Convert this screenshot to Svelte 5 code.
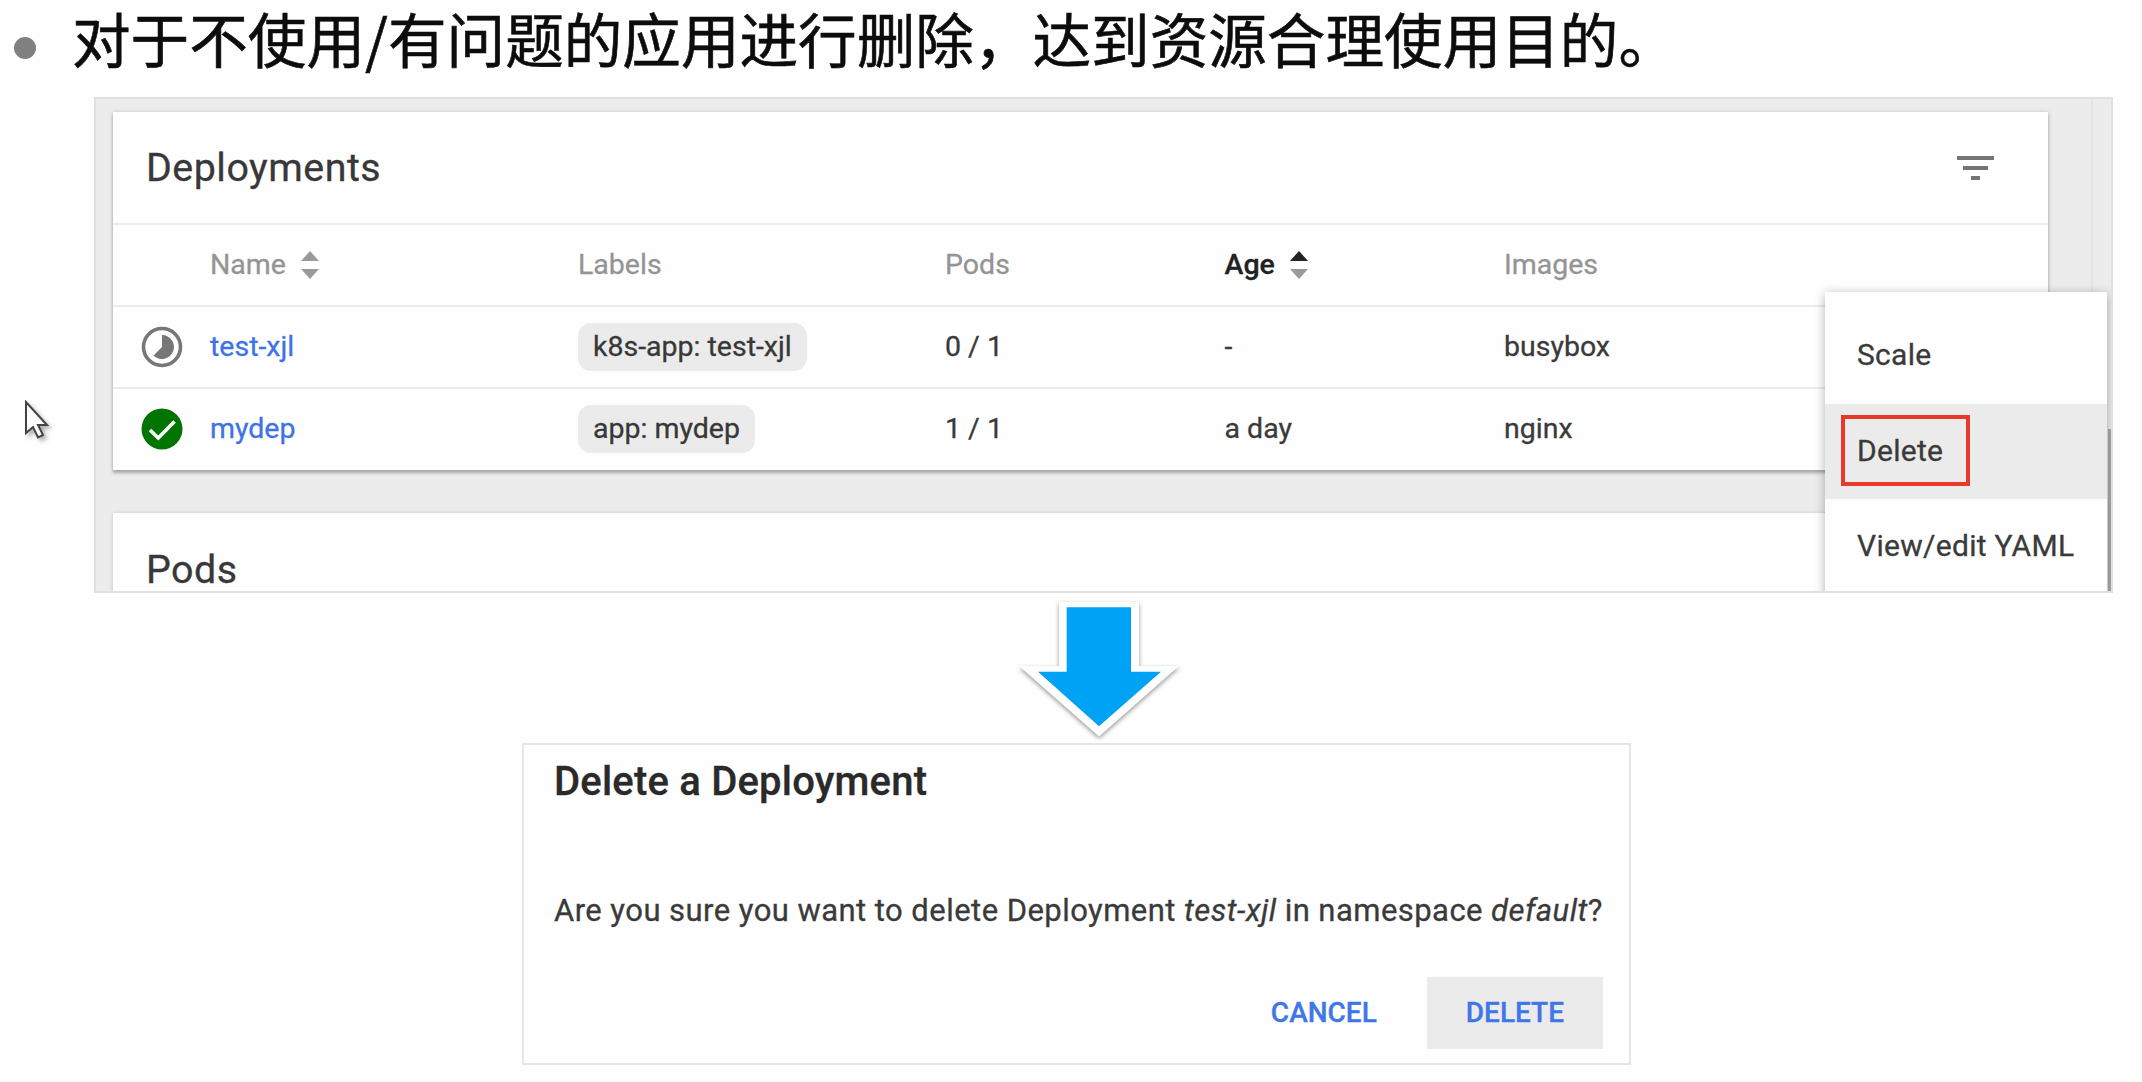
<script>
  const columns = [
    { title: 'Name', sort: 'none' },
    { title: 'Labels' },
    { title: 'Pods' },
    { title: 'Age', sort: 'asc' },
    { title: 'Images' },
  ];

  const deployments = [
    { status: 'pending', name: 'test-xjl', label: 'k8s-app: test-xjl', pods: '0 / 1', age: '-', image: 'busybox' },
    { status: 'ready', name: 'mydep', label: 'app: mydep', pods: '1 / 1', age: 'a day', image: 'nginx' },
  ];

  const actions = ['Scale', 'Delete', 'View/edit YAML'];
</script>

<main>
  <header class="heading">
    <span class="bullet"></span>
    <h1>对于不使用/有问题的应用进行删除，达到资源合理使用目的。</h1>
  </header>

  <section class="panel">
    <article class="card">
      <div class="card-head">
        <h2>Deployments</h2>
        <svg class="filter" viewBox="0 0 37 24">
          <path d="M0 0h37v4H0zM6 10h25v4H6zM14 20h9v4h-9z" />
        </svg>
      </div>
      <div class="row titles">
        <span></span>
        {#each columns as col}
          <span class="cell" class:active={col.sort === 'asc'}>
            {col.title}
            {#if col.sort}
              <svg class="sort" viewBox="0 0 18 28">
                <path class="up" d="M9 0l9 10H0z" />
                <path class="down" d="M9 28l9-10H0z" />
              </svg>
            {/if}
          </span>
        {/each}
      </div>
      {#each deployments as item}
        <div class="row">
          <span class="status">
            {#if item.status === 'ready'}
              <svg viewBox="0 0 42 42">
                <circle cx="21" cy="21" r="20.5" fill="#007400" />
                <path d="M9 22l8.3 8L33.500 13.500" fill="none" stroke="#fff" stroke-width="3.6" />
              </svg>
            {:else}
              <svg viewBox="0 0 42 42">
                <circle cx="21" cy="21" r="18.500" fill="none" stroke="#777" stroke-width="3.6" />
                <path d="M21 9a12 12 0 1 1-8.500 20.500L21 21z" fill="#777" />
              </svg>
            {/if}
          </span>
          <a class="cell link">{item.name}</a>
          <span class="cell"><span class="chip">{item.label}</span></span>
          <span class="cell">{item.pods}</span>
          <span class="cell">{item.age}</span>
          <span class="cell">{item.image}</span>
        </div>
      {/each}
    </article>

    <article class="card next">
      <div class="card-head"><h2 class="pods">Pods</h2></div>
    </article>

    <div class="gutter"></div>
    <div class="scroll"></div>
    <ul class="menu">
      {#each actions as action}
        <li class:hover={action === 'Delete'}>
          <span class:marked={action === 'Delete'}>{action}</span>
        </li>
      {/each}
    </ul>
  </section>

  <svg class="arrow" viewBox="0 0 180 150">
    <path class="rim" d="M51 6H131V70H171L91 140.500 11 70H51z" />
    <path d="M58.700 11.300H123V75.700h30L91 130.300 30 75.700h28.700z" fill="#00a2f5" />
  </svg>

  <section class="dialog">
    <h3>Delete a Deployment</h3>
    <p>Are you sure you want to delete Deployment <em>test-xjl</em> in namespace <em>default</em>?</p>
    <div class="buttons">
      <button>CANCEL</button>
      <button class="focused">DELETE</button>
    </div>
  </section>

  <svg class="pointer" viewBox="0 0 32 44">
    <path d="M2 2v31l7-6 5 10.500 5-2.500-5-10h9z" />
  </svg>
</main>

<style>
  :global(body) {
    background: #fefefe;
  }
  main {
    position: relative;
    box-sizing: border-box;
    width: 2142px;
    height: 1082px;
    overflow: hidden;
    background: #fefefe;
    color: #3a3a3a;
    font: 400 28.5px/36px Roboto, 'Noto Sans CJK SC', sans-serif;
    -webkit-text-stroke: 0.3px currentColor;
  }
  h1, h2, h3, p, ul {
    margin: 0;
    padding: 0;
    font-weight: 400;
  }
  .heading {
    display: flex;
    height: 97px;
  }
  .bullet {
    width: 22px;
    height: 22px;
    margin: 37px 36px 0 14px;
    border-radius: 50%;
    background: #808080;
  }
  h1 {
    color: #0c0c0c;
    font: 400 58.6px/76px 'Noto Sans CJK SC', sans-serif;
    white-space: nowrap;
    -webkit-text-stroke: 0.6px currentColor;
  }
  .panel {
    position: relative;
    box-sizing: border-box;
    width: 2019px;
    height: 496px;
    margin-left: 94px;
    padding: 13px 0 0 17px;
    border: 2px solid #e0e0e0;
    background: #ececec;
    overflow: hidden;
  }
  .card {
    width: 1935px;
    height: 358px;
    background: #fefefe;
    box-shadow: 0 3px 3px #a8a8a8, 0 0 4px #c6c6c6;
  }
  .next {
    margin-top: 43px;
    box-shadow: 0 0 4px #c6c6c6;
  }
  .card-head {
    display: flex;
    align-items: center;
    justify-content: space-between;
    height: 111px;
    padding: 0 54px 0 33px;
  }
  h2 {
    color: #383838;
    font-size: 39.4px;
    line-height: 48px;
    letter-spacing: 0.5px;
  }
  .pods {
    padding-top: 3px;
  }
  .filter {
    width: 37px;
    height: 24px;
    fill: #757575;
  }
  .row {
    display: grid;
    grid-template-columns: 97px 368px 367px 279.5px 279.5px 1fr;
    align-items: center;
    box-sizing: border-box;
    height: 82px;
    padding-bottom: 1px;
    border-top: 2px solid #ebebeb;
  }
  .titles {
    color: #949494;
    padding-bottom: 0;
  }
  .cell {
    display: flex;
    align-items: center;
    white-space: nowrap;
  }
  .active {
    color: #222;
    font-weight: 500;
  }
  .sort {
    width: 18px;
    height: 28px;
    margin-left: 15px;
    fill: #9a9a9a;
  }
  .active .up {
    fill: #222;
  }
  .status {
    display: flex;
    padding-left: 28px;
  }
  .status svg {
    width: 42px;
    height: 42px;
  }
  .link {
    color: #3d73e6;
  }
  .chip {
    padding: 6px 15px;
    border-radius: 13px;
    background: #ebebeb;
    color: #383838;
  }
  .gutter {
    position: absolute;
    top: 0;
    right: 18px;
    width: 2px;
    height: 100%;
    background: #e4e4e4;
  }
  .scroll {
    position: absolute;
    right: -1px;
    bottom: 0;
    width: 4px;
    height: 162px;
    background: #ababab;
  }
  .menu {
    position: absolute;
    top: 193px;
    right: 4px;
    width: 282px;
    height: 320px;
    padding-top: 16px;
    box-sizing: border-box;
    background: #fefefe;
    box-shadow: 0 2px 10px rgba(0, 0, 0, 0.3);
    font-size: 30px;
    letter-spacing: 0.3px;
    list-style: none;
  }
  li {
    display: flex;
    align-items: center;
    box-sizing: border-box;
    height: 95.5px;
    padding: 0 0 2px 16px;
  }
  .hover {
    background: #ebebeb;
  }
  li span {
    padding: 0 16px;
    white-space: nowrap;
  }
  .marked {
    box-sizing: border-box;
    width: 129px;
    padding: 13px 12px;
    border: 4px solid #e8392b;
    line-height: 37px;
  }
  .arrow {
    position: absolute;
    left: 1008px;
    top: 596px;
    width: 180px;
    height: 150px;
  }
  .rim {
    fill: #fefefe;
    filter: drop-shadow(0 2px 2px rgba(0, 0, 0, 0.4));
  }
  .dialog {
    box-sizing: border-box;
    width: 1109px;
    height: 322px;
    margin: 150px 0 0 522px;
    padding: 13px 26px 0 30px;
    border: 2px solid #e5e5e5;
    background: #fefefe;
  }
  h3 {
    color: #2a2a2a;
    font-size: 40px;
    font-weight: 500;
    line-height: 48px;
    letter-spacing: 0.2px;
    white-space: nowrap;
  }
  p {
    margin-top: 85px;
    font-size: 31px;
    line-height: 40px;
    letter-spacing: 0.45px;
    white-space: nowrap;
  }
  .buttons {
    display: flex;
    justify-content: flex-end;
    margin-top: 46px;
  }
  button {
    height: 72px;
    padding: 0 39px;
    border: 0;
    background: none;
    color: #3f76e8;
    font: 500 28px/36px Roboto, sans-serif;
  }
  .focused {
    background: #ebebeb;
    margin-left: 11px;
  }
  .pointer {
    position: absolute;
    left: 24px;
    top: 400px;
    width: 32px;
    height: 44px;
    fill: #fefefe;
    stroke: #444;
    stroke-width: 2;
    filter: drop-shadow(3px 3px 2px rgba(0, 0, 0, 0.3));
  }
</style>
